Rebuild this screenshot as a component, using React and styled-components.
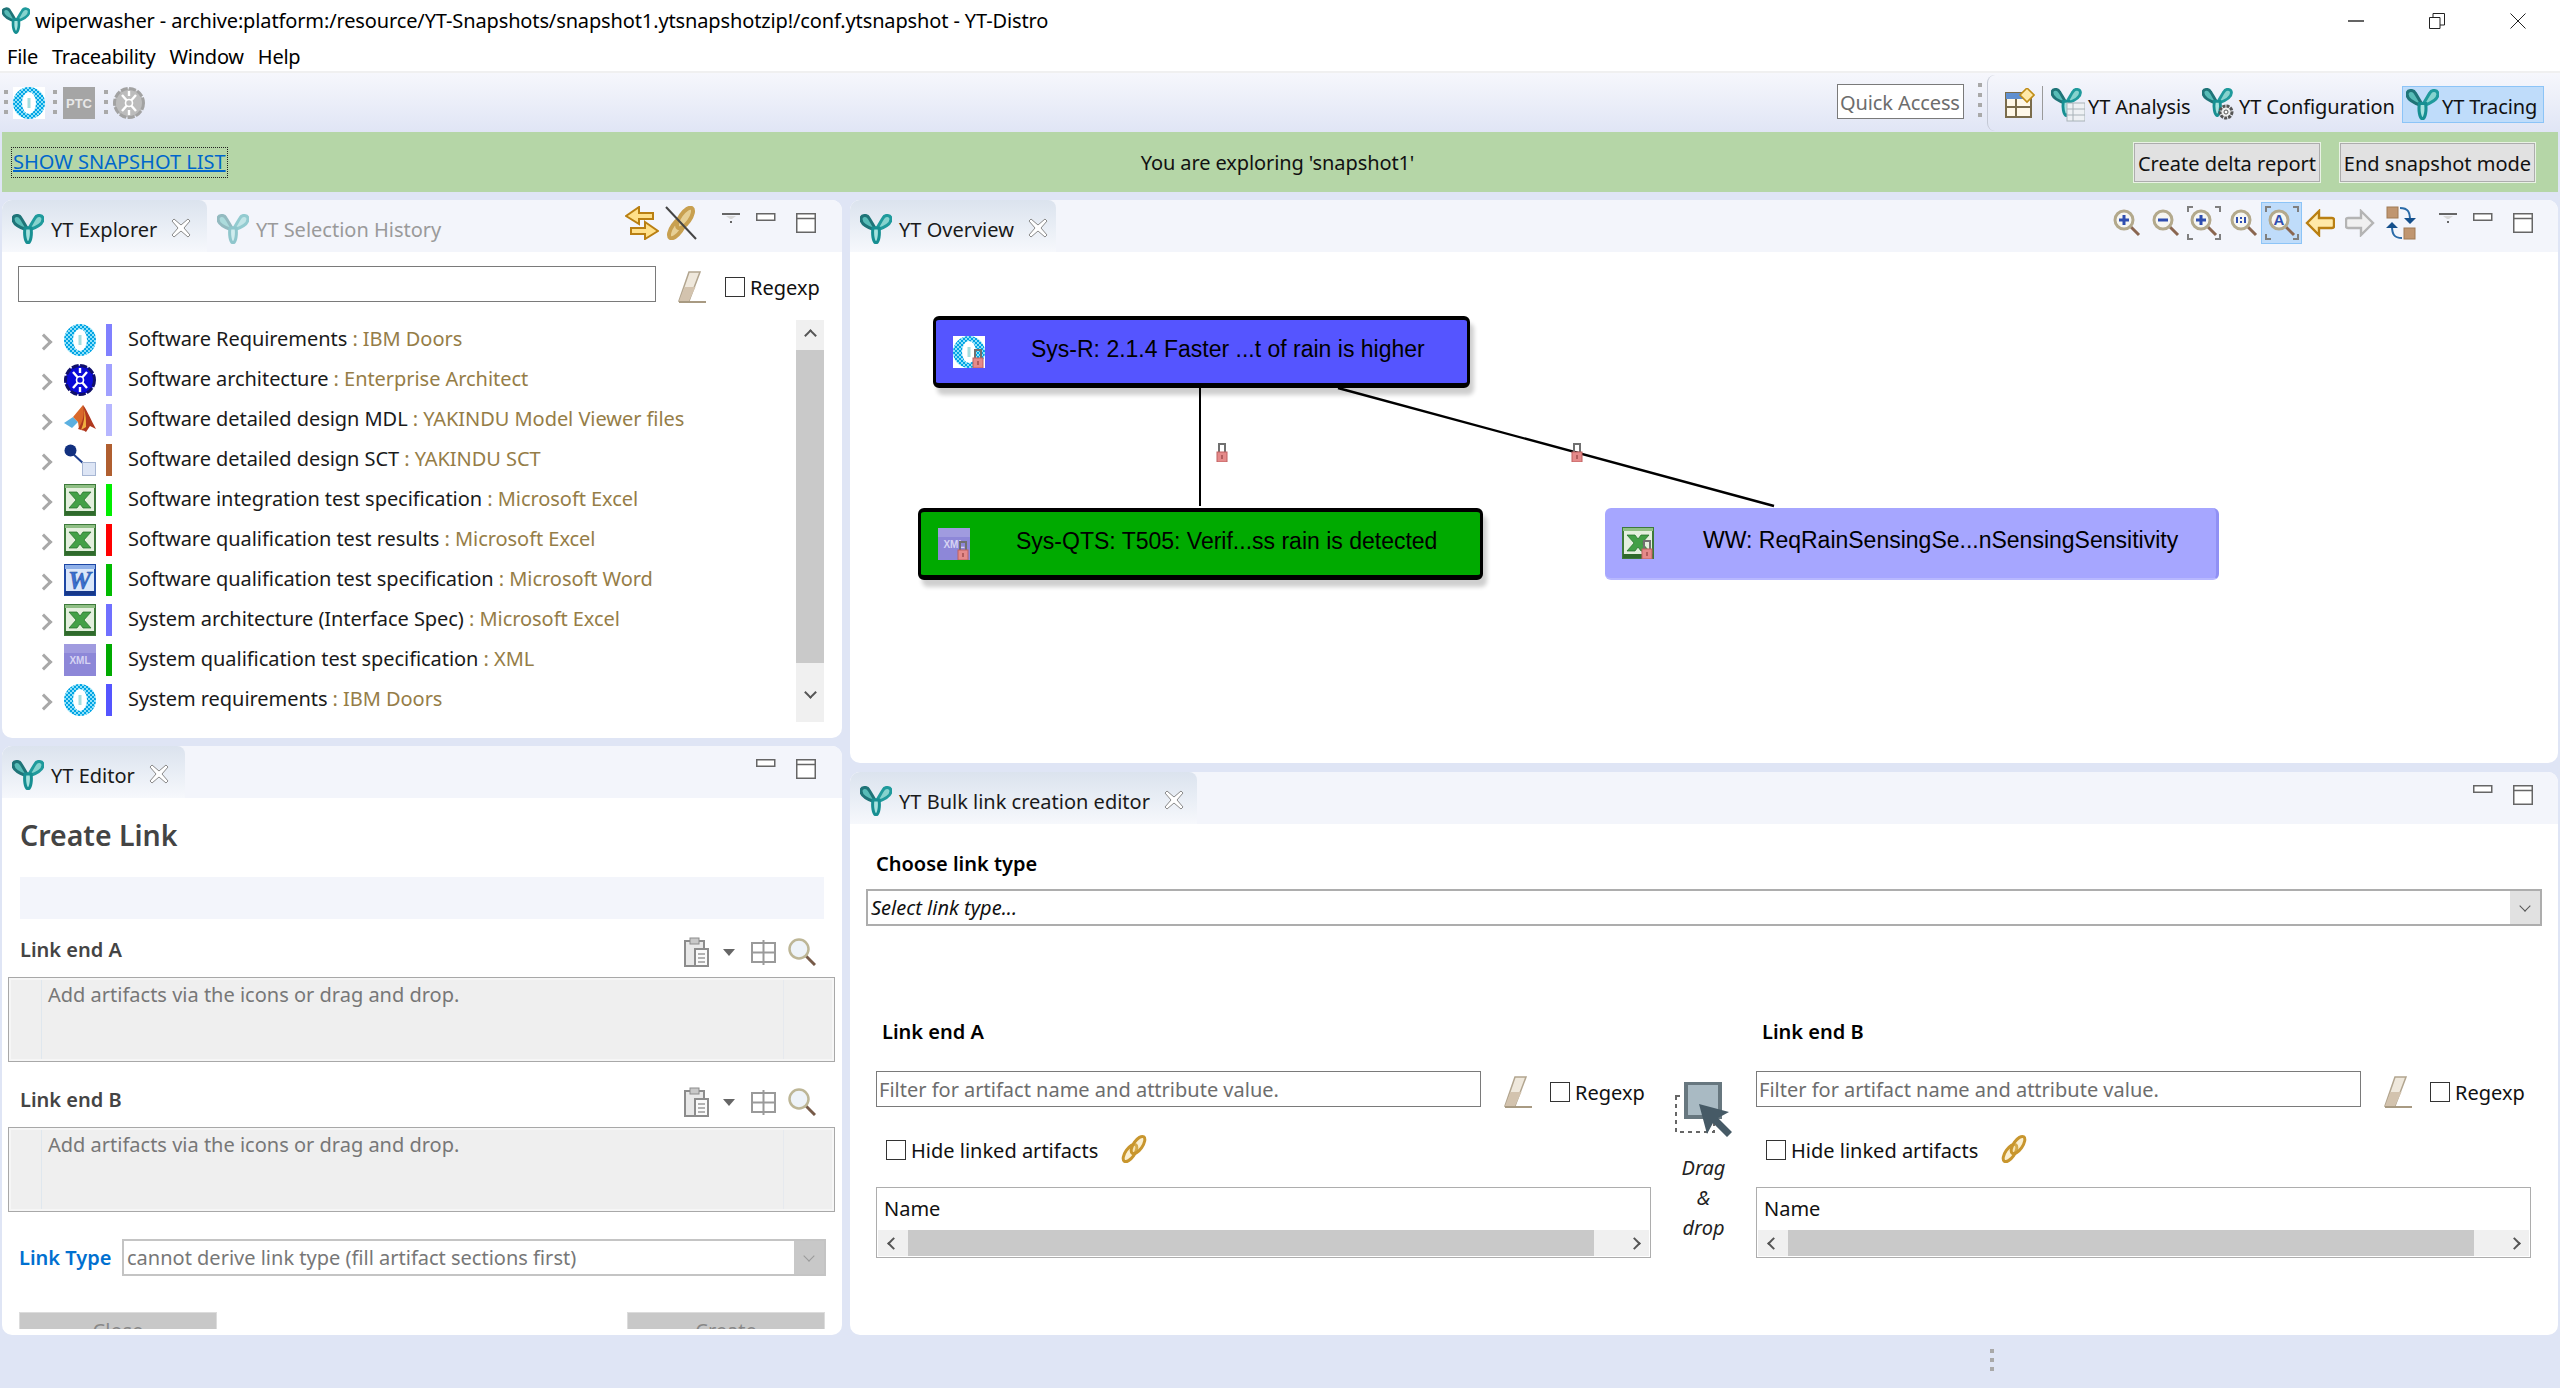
import React from "react";
import styled, { createGlobalStyle } from "styled-components";

const GlobalStyle = createGlobalStyle`
  html, body { margin: 0; padding: 0; background: #dfe5f5; }
  * { box-sizing: border-box; }
  body { font-family: "Noto Sans", "Open Sans", sans-serif; font-size: 20px; color: #1a1a1a; }
`;

/* ---------- drawn icons ---------- */

const YtLogoPaths = () => (
  <>
    <path d="M15 16C9 14 1 11 1 5 1 1 7 0 9 4c2 3 4 7 6 10z" fill="#58bcb7" stroke="#1f7478" strokeWidth="3" />
    <path d="M17 16c6-2 14-5 14-11 0-4-6-5-8-1-2 3-4 7-6 10z" fill="#86d3ce" stroke="#1f9a9c" strokeWidth="3" />
    <path d="M13 14c-1 6 0 14 3 15 3-1 4-9 3-15z" fill="#a5e2de" stroke="#178f92" strokeWidth="3" />
  </>
);

const YtLogo = ({ faded, w = 32, h = 30 }) => (
  <svg width={w} height={h} viewBox="0 0 32 30" opacity={faded ? 0.45 : 1} style={{ flexShrink: 0 }}>
    <YtLogoPaths />
  </svg>
);

const DoorsIcon = () => (
  <svg width="32" height="32" viewBox="0 0 32 32">
    <defs>
      <pattern id="chk" width="4" height="4" patternUnits="userSpaceOnUse">
        <rect width="4" height="4" fill="#8fe0f8" />
        <rect width="2" height="2" fill="#00a4e4" />
        <rect x="2" y="2" width="2" height="2" fill="#00a4e4" />
      </pattern>
    </defs>
    <rect width="32" height="32" fill="#fff" />
    <ellipse cx="16" cy="16" rx="16" ry="16" fill="url(#chk)" />
    <ellipse cx="16" cy="16" rx="7" ry="11" fill="#fff" />
    <rect x="14.5" y="11" width="3" height="10" fill="#a8dede" />
  </svg>
);

const EaIcon = ({ grey }) => (
  <svg width="32" height="32" viewBox="0 0 32 32">
    <circle cx="16" cy="16" r="14.5" fill={grey ? "#bcbcbc" : "#0a0ad8"} stroke={grey ? "#a2a2a2" : "#10106a"} strokeWidth="3" strokeDasharray="7 1.5" />
    <path d="M9 8l14 16M23 8L9 24M16 4v5M16 23v5" stroke="#fff" strokeWidth="2.4" />
    <circle cx="16" cy="16" r="3.5" fill={grey ? "#bcbcbc" : "#0a0ad8"} stroke="#fff" strokeWidth="1.6" />
  </svg>
);

const PtcIcon = () => (
  <svg width="32" height="32" viewBox="0 0 32 32">
    <rect width="32" height="32" fill="#a5a5a5" />
    <text x="16" y="21" textAnchor="middle" fontSize="13" fontWeight="700" fontFamily="Liberation Sans, sans-serif" fill="#e8e8e8">PTC</text>
  </svg>
);

const MatlabIcon = () => (
  <svg width="32" height="32" viewBox="0 0 32 32">
    <path d="M0 19l9-6 5 5-6 6z" fill="#5bb0e0" />
    <path d="M9 13l10-12 4 10-8 14-1-7z" fill="#d9682a" />
    <path d="M19 1c4 5 8 15 13 24l-6-3-4 6c-2-2-6-2-8-3 5-7 7-15 5-24z" fill="#b0381e" />
    <path d="M20 5c2 6 2 12 2 18l-5 3c3-7 4-14 3-21z" fill="#f0b040" />
  </svg>
);

const SctIcon = () => (
  <svg width="32" height="32" viewBox="0 0 32 32">
    <path d="M7 8l15 14" stroke="#1e3f8f" strokeWidth="2" />
    <circle cx="6.5" cy="6.5" r="6" fill="#12307f" />
    <rect x="18.5" y="18.5" width="13" height="13" fill="#dde5f5" stroke="#a7b6d3" />
  </svg>
);

const ExcelIcon = () => (
  <svg width="32" height="32" viewBox="0 0 32 32">
    <rect x="1" y="1" width="30" height="30" fill="#e4f0de" stroke="#3d7a3a" strokeWidth="2" />
    <rect x="1" y="1" width="30" height="3" fill="#8fbf85" />
    <rect x="1" y="27" width="30" height="4" fill="#2f6a2c" />
    <path d="M5 8h8l3 4 3-4h8l-7 8 7 8h-8l-3-4-3 4H5l7-8z" fill="#43a047" stroke="#1f6b25" strokeWidth="0.7" />
  </svg>
);

const WordIcon = () => (
  <svg width="32" height="32" viewBox="0 0 32 32">
    <rect x="1" y="1" width="30" height="30" fill="#dbe7fa" stroke="#1d47a5" strokeWidth="2" />
    <rect x="1" y="1" width="30" height="4" fill="#8fb0e8" />
    <rect x="1" y="27" width="30" height="4" fill="#17388a" />
    <text x="15.5" y="25" textAnchor="middle" fontSize="26" fontWeight="700" fontStyle="italic" fontFamily="Liberation Serif, serif" fill="#3a6fd0" stroke="#24509f" strokeWidth="0.5">W</text>
  </svg>
);

const XmlIcon = () => (
  <svg width="32" height="32" viewBox="0 0 32 32">
    <rect width="32" height="32" fill="#8d87d8" />
    <rect width="32" height="9" fill="#a09bdf" />
    <text x="16" y="20" textAnchor="middle" fontSize="10" fontWeight="700" fontFamily="Liberation Sans, sans-serif" fill="#d6d3f3">XML</text>
  </svg>
);

const LockIcon = ({ w = 18, h = 20 }) => (
  <svg width={w} height={h} viewBox="0 0 12 20">
    <path d="M3 10V2h6v8" fill="none" stroke="#707070" strokeWidth="2" />
    <rect x="1" y="10" width="10" height="10" fill="#e58a8a" stroke="#c06060" />
    <rect x="5.5" y="13" width="1" height="4" fill="#803030" />
  </svg>
);

const Eraser = () => (
  <svg width="30" height="36" viewBox="0 0 30 36">
    <path d="M13 3h11L13 32H3z" fill="#efe8dc" stroke="#b2a58f" strokeWidth="1.5" />
    <path d="M8.5 18h11L13 32H3z" fill="#d3c3ae" />
    <path d="M3 33h27" stroke="#a89a82" strokeWidth="2" />
  </svg>
);

const ChainIcon = () => (
  <svg width="30" height="30" viewBox="0 0 30 30">
    <g fill="#f1d27a" fillOpacity="0.35" stroke="#c8962e" strokeWidth="3">
      <ellipse cx="11" cy="19" rx="4.5" ry="10" transform="rotate(35 11 19)" />
      <ellipse cx="19" cy="11" rx="4.5" ry="10" transform="rotate(35 19 11)" />
    </g>
  </svg>
);

const CloseGlyph = () => (
  <svg width="20" height="20" viewBox="0 0 20 20">
    <path d="M3 1l7 6 7-6 2 2-6 7 6 7-2 2-7-6-7 6-2-2 6-7-6-7z" fill="#fff" stroke="#8a8a8a" />
  </svg>
);

const ViewMenuGlyph = () => (
  <svg width="18" height="10" viewBox="0 0 18 10">
    <rect width="18" height="2" fill="#666" />
    <path d="M4 3h10l-4 3H8z" fill="#d8d8d8" />
    <rect x="8" y="8" width="2" height="2" fill="#666" />
  </svg>
);

const MinGlyph = () => (
  <svg width="20" height="8" viewBox="0 0 20 8">
    <rect x="0.75" y="0.75" width="18" height="6.5" fill="#fff" stroke="#666" strokeWidth="1.5" />
  </svg>
);

const MaxGlyph = () => (
  <svg width="20" height="20" viewBox="0 0 20 20">
    <rect x="0.75" y="0.75" width="18.5" height="18.5" fill="#fff" stroke="#666" strokeWidth="1.5" />
    <path d="M1 5.5h18" stroke="#666" strokeWidth="1.5" />
  </svg>
);

const Magnifier = ({ glyph, corners }) => (
  <svg width={corners ? 34 : 28} height={corners ? 34 : 28} viewBox={corners ? "-3 -3 34 34" : "0 0 28 28"}>
    <path d="M16 16l10 10" stroke="#8a6650" strokeWidth="3" />
    <circle cx="11" cy="11" r="9" fill="#f6f6f2" stroke="#b3a98c" strokeWidth="3" />
    {glyph === "plus" && <path d="M6 11h10M11 6v10" stroke="#2f4eb0" strokeWidth="3" />}
    {glyph === "minus" && <path d="M6 11h10" stroke="#2f4eb0" strokeWidth="3" />}
    {glyph === "one" && <path d="M7 8v6M15 8v6M11 8v2M11 12v2" stroke="#2f4eb0" strokeWidth="2" />}
    {glyph === "a" && <text x="11" y="16" textAnchor="middle" fontSize="15" fontWeight="700" fontFamily="Liberation Sans, sans-serif" fill="#2f4eb0">A</text>}
    {corners && <path d="M-2 3v-5h5M25-2h5v5M-2 25v5h5M25 30h5v-5" fill="none" stroke="#7f7f7f" strokeWidth="2" />}
  </svg>
);

const ArrowIcon = ({ dir, muted }) => (
  <svg width="30" height="28" viewBox="0 0 30 28" style={{ transform: dir === "right" ? "scaleX(-1)" : undefined }}>
    <path d="M14 2L2 14l12 12v-7h13c2 0 2-1 2-2v-6c0-1 0-2-2-2H14z" fill={muted ? "#f0f0f0" : "#ffe9a8"} stroke={muted ? "#b4b4b4" : "#b97f12"} strokeWidth="2.4" />
  </svg>
);

const SyncIcon = () => (
  <svg width="30" height="34" viewBox="0 0 30 34">
    <rect x="1" y="1" width="11" height="11" fill="#c09670" stroke="#a07a55" />
    <rect x="18" y="22" width="11" height="11" fill="#c09670" stroke="#a07a55" />
    <path d="M14 2c8 0 10 4 10 12M16 32c-8 0-10-4-10-12" fill="none" stroke="#2a6ba8" strokeWidth="2" />
    <path d="M18 12h12l-6 6zM0 22h12l-6-6z" fill="#15508c" />
  </svg>
);

const SwapArrows = () => (
  <svg width="34" height="34" viewBox="0 0 34 34">
    <path d="M14 1L1 10l13 8v-5h14V7H14zM20 16l13 9-13 8v-5H6v-6h14z" fill="#ffe08a" stroke="#b97f12" strokeWidth="2" />
  </svg>
);

const UnlinkIcon = () => (
  <svg width="34" height="34" viewBox="0 0 34 34">
    <g fill="#e6cf95" stroke="#c8a050" strokeWidth="4">
      <ellipse cx="13" cy="22" rx="5" ry="12" transform="rotate(35 13 22)" />
      <ellipse cx="21" cy="12" rx="5" ry="12" transform="rotate(35 21 12)" />
    </g>
    <path d="M2 1l30 32" stroke="#444" strokeWidth="2" />
  </svg>
);

const Clipboard = () => (
  <svg width="28" height="30" viewBox="0 0 28 30">
    <rect x="2" y="4" width="19" height="25" fill="#e8e8e8" stroke="#8c8c8c" strokeWidth="2" />
    <rect x="7" y="1" width="9" height="6" fill="#c8c8c8" stroke="#8c8c8c" />
    <rect x="12" y="12" width="13" height="17" fill="#fafafa" stroke="#8c8c8c" strokeWidth="2" />
    <path d="M15 17h7M15 21h7M15 25h7" stroke="#9a9a9a" strokeWidth="1.5" />
  </svg>
);

const GridGlyph = () => (
  <svg width="25" height="25" viewBox="0 0 25 25">
    <rect x="1" y="3" width="23" height="19" fill="none" stroke="#9a9a9a" strokeWidth="2" />
    <path d="M12.5 0v25M1 12.5h23" stroke="#9a9a9a" strokeWidth="2" />
  </svg>
);

const SearchGlyph = () => (
  <svg width="28" height="28" viewBox="0 0 28 28">
    <path d="M17 17l10 10" stroke="#765a48" strokeWidth="3" />
    <circle cx="11" cy="11" r="9.5" fill="#eef3f8" stroke="#bdb696" strokeWidth="2.5" />
  </svg>
);

const DragIcon = () => (
  <svg width="58" height="58" viewBox="0 0 58 58">
    <rect x="1" y="14" width="38" height="36" fill="none" stroke="#666" strokeWidth="2" strokeDasharray="4 4" />
    <rect x="11" y="1" width="34" height="34" fill="#a9bac3" stroke="#67777f" strokeWidth="4" />
    <path d="M24 22l8 30 6-11 14 14 5-5-14-14 11-6z" fill="#465a66" />
  </svg>
);

const PerspectiveIcon = () => (
  <svg width="30" height="30" viewBox="0 0 30 30">
    <rect x="1" y="5" width="25" height="24" fill="#fff8e8" stroke="#7a6c4c" strokeWidth="2" />
    <rect x="1" y="5" width="25" height="6" fill="#5f8fd0" />
    <path d="M11 11v18M1 19h25" stroke="#7a6c4c" strokeWidth="2" />
    <path d="M22 0l7 7-7 7-7-7z" fill="#ffe9a8" stroke="#c08d18" strokeWidth="1.6" />
  </svg>
);

const AnalysisLogo = () => (
  <svg width="34" height="34" viewBox="0 0 34 34">
    <g transform="scale(0.95)"><YtLogoPaths /></g>
    <rect x="16" y="15" width="18" height="18" fill="#eef1f4" stroke="#a8b2b8" />
    <path d="M16 21h18M16 27h18M22 15v18" stroke="#a8b2b8" />
  </svg>
);

const ConfigLogo = () => (
  <svg width="34" height="34" viewBox="0 0 34 34">
    <g transform="scale(0.95)"><YtLogoPaths /></g>
    <circle cx="24" cy="24" r="6" fill="#eee" stroke="#555" strokeWidth="3" strokeDasharray="3 1" />
    <circle cx="24" cy="24" r="2" fill="#fff" stroke="#555" />
  </svg>
);

/* ---------- window chrome ---------- */

const Page = styled.div`
  width: 2560px;
  height: 1388px;
  display: flex;
  flex-direction: column;
  background: #dfe5f5;
  overflow: hidden;
`;

const TitleBar = styled.div`
  height: 36px;
  background: #fff;
  display: flex;
  align-items: center;
  padding: 5px 0 0 2px;
  gap: 5px;
  color: #000;
`;

const TitleText = styled.div`
  flex: 1;
  white-space: nowrap;
  letter-spacing: -0.13px;
`;

const WinButtons = styled.div`
  display: flex;
  gap: 65px;
  padding-right: 34px;
  align-items: center;
`;

const MenuBar = styled.div`
  height: 37px;
  background: #fff;
  display: flex;
  gap: 14px;
  padding: 5px 0 0 7px;
  align-items: center;
  color: #000;
  letter-spacing: -0.25px;
  border-bottom: 2px solid #f0f0f0;
`;

const ToolBar = styled.div`
  height: 59px;
  display: flex;
  align-items: center;
  padding-right: 16px;
  background: linear-gradient(#f6f7fc, #e0e5f5);
`;

const Grip = styled.div`
  width: 4px;
  height: ${(p) => p.$h || 26}px;
  margin-left: ${(p) => p.$ml}px;
  margin-right: ${(p) => p.$mr}px;
  background: repeating-linear-gradient(#a9a9a9 0 4px, transparent 4px 10px);
`;

const QuickAccess = styled.div`
  margin-left: auto;
  width: 127px;
  height: 35px;
  margin-top: -2px;
  border: 1px solid #7a7a7a;
  background: #fff;
  color: #6d6d6d;
  padding-left: 2px;
  line-height: 35px;
  letter-spacing: -0.1px;
  white-space: nowrap;
  overflow: hidden;
`;

const CurveSep = styled.div`
  width: 9px;
  height: 56px;
  border-left: 1px solid #c4c8d4;
  border-radius: 8px 0 0 8px;
  margin: 0 9px 0 5px;
`;

const ThinSep = styled.div`
  width: 1px;
  height: 34px;
  background: #9a9a9a;
  margin: 0 7px;
`;

const Perspective = styled.div`
  width: ${(p) => p.$w}px;
  height: 37px;
  margin-top: 4px;
  display: flex;
  align-items: center;
  gap: 3px;
  padding-left: ${(p) => (p.$active ? 3 : 0)}px;
  white-space: nowrap;
  color: #111;
  letter-spacing: -0.1px;
  background: ${(p) => (p.$active ? "#bfdcfa" : "transparent")};
  border: 1px solid ${(p) => (p.$active ? "#8cc4f7" : "transparent")};
`;

const PerspectiveLabel = styled.span`
  margin-top: 3px;
`;

const SnapshotBar = styled.div`
  height: 60px;
  margin: 0 2px;
  padding-right: 23px;
  background: #b5d6a7;
  display: grid;
  grid-template-columns: 1fr auto 1fr;
  align-items: center;
`;

const SnapshotLink = styled.a`
  justify-self: start;
  margin-left: 10px;
  height: 29px;
  line-height: 28px;
  padding: 0 1px;
  color: #0066cc;
  text-decoration: underline;
  outline: 1px dotted #222;
  white-space: nowrap;
`;

const SnapshotNote = styled.div`
  color: #111;
  margin-left: 18px;
  letter-spacing: -0.1px;
`;

const SnapshotActions = styled.div`
  justify-self: end;
  display: flex;
  gap: 20px;
`;

const GreyButton = styled.div`
  width: ${(p) => p.$w}px;
  height: 39px;
  background: #e1e1e1;
  border: 1px solid #adadad;
  box-shadow: 0 0 0 1px #e9f2e4;
  text-align: center;
  line-height: 39px;
  color: #111;
  white-space: nowrap;
`;

/* ---------- panels ---------- */

const Workbench = styled.div`
  flex: 1;
  display: flex;
  gap: 8px;
  padding: 8px 2px 53px;
`;

const Column = styled.div`
  width: ${(p) => p.$w}px;
  display: flex;
  flex-direction: column;
  gap: ${(p) => p.$gap}px;
`;

const Panel = styled.section`
  height: ${(p) => p.$h}px;
  display: flex;
  flex-direction: column;
  background: #fff;
  border-radius: 10px;
  overflow: hidden;
  padding-bottom: 6px;
`;

const PanelHead = styled.header`
  height: 52px;
  flex-shrink: 0;
  background: #f3f5fb;
  display: flex;
  align-items: stretch;
`;

const Tab = styled.div`
  width: ${(p) => p.$w}px;
  display: flex;
  align-items: center;
  padding: 6px 0 0 10px;
  gap: 7px;
  white-space: nowrap;
  border-radius: 8px 8px 0 0;
  color: ${(p) => (p.$active ? "#1a1a1a" : "#9a9a9a")};
  background: ${(p) => (p.$active ? "linear-gradient(#dbe3ee, #f6f8fc)" : "transparent")};
`;

const TabClose = styled.span`
  display: flex;
  margin-left: ${(p) => p.$ml}px;
  margin-top: -3px;
`;

const HeadTools = styled.div`
  margin-left: auto;
  display: flex;
  align-items: center;
  padding-right: ${(p) => p.$pr}px;
`;

const ToolSlot = styled.div`
  display: flex;
  align-items: center;
  justify-content: center;
  margin-left: ${(p) => p.$ml || 0}px;
  margin-top: ${(p) => p.$mt || 0}px;
  ${(p) => p.$on && "padding: 3px 2.5px; background: #bfdcfa; outline: 1px solid #8cc4f7;"}
`;

const Glyphs = ({ noMenu, menuGap = 24 }) => (
  <>
    {!noMenu && <ToolSlot $ml={menuGap} $mt={-17}><ViewMenuGlyph /></ToolSlot>}
    <ToolSlot $ml={noMenu ? 0 : 16} $mt={-19}><MinGlyph /></ToolSlot>
    <ToolSlot $ml={20} $mt={-7}><MaxGlyph /></ToolSlot>
  </>
);

/* ---------- explorer ---------- */

const FilterRow = styled.div`
  display: flex;
  align-items: center;
  height: 36px;
  margin-top: 14px;
  padding-left: 16px;
  flex-shrink: 0;
`;

const FilterInput = styled.input`
  width: ${(p) => p.$w}px;
  height: 36px;
  border: 1px solid #7a7a7a;
  background: #fff;
  padding: 0 2px;
  font: inherit;
  outline: none;
  &::placeholder { color: #6d6d6d; opacity: 1; }
`;

const FilterExtras = styled.div`
  display: flex;
  align-items: center;
  margin-top: 6px;
`;

const EraserSlot = styled.span`
  display: flex;
  margin: 0 ${(p) => p.$mr}px 0 ${(p) => p.$ml}px;
`;

const Check = styled.span`
  width: 20px;
  height: 20px;
  flex-shrink: 0;
  background: #fff;
  border: 1px solid #333;
`;

const CheckLabel = styled.span`
  margin-left: 5px;
  color: #111;
  white-space: nowrap;
`;

const TreeArea = styled.div`
  display: flex;
  margin-top: 18px;
  padding-left: 41px;
`;

const TreeList = styled.div`
  flex: 1;
  padding-top: 4px;
`;

const TreeRow = styled.div`
  height: 40px;
  display: flex;
  align-items: center;
  white-space: nowrap;
  padding-bottom: 8px;
`;

const TreeText = styled.span`
  margin-top: -3px;
  letter-spacing: -0.05px;
`;

const Chevron = styled.span`
  width: 12px;
  height: 12px;
  margin: 3px 14px 0 -5px;
  border-top: 3px solid #a8a8a8;
  border-right: 3px solid #a8a8a8;
  transform: rotate(45deg);
`;

const RowIcon = styled.span`
  width: 32px;
  height: 32px;
  display: flex;
`;

const ColorBar = styled.span`
  width: 6px;
  height: 32px;
  margin: 0 16px 0 10px;
  background: ${(p) => p.$c};
`;

const TreeTail = styled.span`
  color: #957d47;
`;

const VScroll = styled.div`
  width: 28px;
  height: 402px;
  margin-right: 18px;
  display: flex;
  flex-direction: column;
  background: #f0f0f0;
`;

const ScrollEnd = styled.div`
  height: ${(p) => p.$h}px;
  flex-shrink: 0;
  display: flex;
  align-items: center;
  justify-content: center;
`;

const VThumb = styled.div`
  height: 313px;
  background: #c9c9c9;
`;

const ScrollCaret = styled.span`
  width: 9px;
  height: 9px;
  border-top: 2px solid #555;
  border-left: 2px solid #555;
  transform: rotate(${(p) => p.$deg}deg);
`;

/* ---------- overview ---------- */

const Canvas = styled.div`
  position: relative;
  flex: 1;
`;

const Wires = styled.svg`
  position: absolute;
  left: 0;
  top: 0;
  z-index: 1;
  pointer-events: none;
`;

const Node = styled.div`
  position: absolute;
  left: ${(p) => p.$x}px;
  top: ${(p) => p.$y}px;
  width: ${(p) => p.$w}px;
  height: 72px;
  display: flex;
  align-items: center;
  gap: ${(p) => p.$gap}px;
  padding-left: 17px;
  background: ${(p) => p.$bg};
  border-radius: 6px;
  border: ${(p) => (p.$plain ? "none" : "3px solid #000")};
  border-top-width: ${(p) => (p.$plain ? 0 : 4)}px;
  border-bottom-width: ${(p) => (p.$plain ? 0 : 5)}px;
  ${(p) => p.$plain && "border-right: 3px solid #9090f4; border-bottom: 2px solid #b8b8ff;"}
  box-shadow: ${(p) => (p.$plain ? "none" : "4px 7px 4px #cfcfcf")};
  font-family: "Liberation Sans", Arial, sans-serif;
  font-size: 23px;
  color: #000;
  white-space: nowrap;
`;

const NodeLabel = styled.span`
  margin-top: -5px;
`;

const NodeIcon = styled.span`
  position: relative;
  width: 32px;
  height: 32px;
  display: flex;
`;

const NodeLock = styled.span`
  position: absolute;
  right: 0;
  bottom: 0;
  display: flex;
`;

const WireLock = styled.span`
  position: absolute;
  z-index: 2;
  left: ${(p) => p.$x}px;
  top: ${(p) => p.$y}px;
  display: flex;
`;

/* ---------- create link editor ---------- */

const EditorBody = styled.div`
  flex: 1;
  min-height: 0;
  overflow: hidden;
`;

const FormTitle = styled.h1`
  margin: 19px 0 0 18px;
  height: 36px;
  line-height: 36px;
  font-size: 28.5px;
  font-weight: 600;
  color: #444;
`;

const Band = styled.div`
  height: 42px;
  width: 804px;
  margin: 24px 0 0 18px;
  background: #f3f5fb;
`;

const EndHead = styled.div`
  height: 32px;
  margin-top: ${(p) => p.$mt}px;
  padding: 0 26px 0 18px;
  display: flex;
  align-items: center;
  font-weight: 600;
  color: #444;
`;

const EndName = styled.span`
  margin-top: -6px;
`;

const EndTools = styled.div`
  margin-left: auto;
  display: flex;
  align-items: center;
`;

const DropCaret = styled.span`
  width: 0;
  height: 0;
  margin: 0 16px 0 12px;
  border: 6px solid transparent;
  border-top: 7px solid #666;
  border-bottom: 0;
`;

const ArtifactBox = styled.div`
  width: 827px;
  height: 85px;
  margin: 9px 0 0 6px;
  padding: 3px 0 0 39px;
  background:
    linear-gradient(90deg, transparent 32px, #dfe7ee 32px 33px, transparent 33px),
    linear-gradient(90deg, transparent 774px, #e6e9ee 774px 775px, transparent 775px),
    #efefef;
  border: 1px solid #a8a8a8;
  box-shadow: inset 0 0 0 2px #f6f6f6;
  color: #777;
`;

const LinkTypeRow = styled.div`
  display: flex;
  align-items: center;
  margin: 27px 0 0 17px;
`;

const LinkTypeLabel = styled.div`
  width: 103px;
  font-weight: 600;
  color: #0070d0;
  white-space: nowrap;
`;

const Combo = styled.div`
  width: ${(p) => p.$w}px;
  height: 37px;
  margin: ${(p) => p.$m || 0};
  display: flex;
  align-items: center;
  justify-content: space-between;
  padding-left: 3px;
  background: #fff;
  border: 2px solid ${(p) => (p.$off ? "#c4c4c4" : "#adadad")};
  color: ${(p) => (p.$off ? "#777" : "#111")};
  font-style: ${(p) => (p.$italic ? "italic" : "normal")};
  white-space: nowrap;
`;

const ComboArrow = styled.span`
  width: 30px;
  height: 100%;
  flex-shrink: 0;
  display: flex;
  align-items: center;
  justify-content: center;
  background: ${(p) => (p.$off ? "#c8c8c8" : "#e1e1e1")};
`;

const ComboCaret = styled.span`
  width: 8px;
  height: 8px;
  margin-top: -4px;
  border-right: 1px solid ${(p) => (p.$off ? "#9a9a9a" : "#555")};
  border-bottom: 1px solid ${(p) => (p.$off ? "#9a9a9a" : "#555")};
  transform: rotate(45deg);
`;

const ActionRow = styled.div`
  display: flex;
  justify-content: space-between;
  width: 806px;
  margin: 36px 0 0 17px;
`;

const ClippedButton = styled.div`
  width: 198px;
  height: 38px;
  flex-shrink: 0;
  background: #c8c8c8;
  border: 1px solid #dcdcdc;
  text-align: center;
  line-height: 36px;
  color: #888;
`;

/* ---------- bulk link editor ---------- */

const BulkBody = styled.div`
  flex: 1;
  min-height: 0;
`;

const BoldLabel = styled.div`
  height: 28px;
  line-height: 28px;
  font-weight: 600;
  color: #000;
  margin: ${(p) => p.$m};
`;

const Ends = styled.div`
  display: flex;
  margin: 92px 0 0 26px;
`;

const EndColumn = styled.div`
  width: 775px;
`;

const EndFilter = styled.div`
  display: flex;
  align-items: center;
  height: 36px;
  margin-top: 25px;
`;

const HideRow = styled.div`
  display: flex;
  align-items: center;
  height: 30px;
  margin: 28px 0 0 10px;
`;

const ChainSlot = styled.span`
  display: flex;
  margin-left: 21px;
  margin-top: -2px;
`;

const NameTable = styled.div`
  height: 71px;
  margin-top: 22px;
  padding: 0 1px 1px;
  display: flex;
  flex-direction: column;
  border: 1px solid #adadad;
`;

const NameHead = styled.div`
  flex: 1;
  padding-left: 6px;
  line-height: 42px;
  color: #111;
`;

const HScroll = styled.div`
  height: 28px;
  display: flex;
  background: #f0f0f0;
`;

const HEnd = styled.div`
  width: 30px;
  display: flex;
  align-items: center;
  justify-content: center;
`;

const HThumb = styled.div`
  flex: 1;
  margin-right: 25px;
  background: #c9c9c9;
`;

const DropHint = styled.div`
  width: 105px;
  padding-top: 64px;
  display: flex;
  flex-direction: column;
  align-items: center;
`;

const DropWords = styled.div`
  margin-top: 13px;
  font-style: italic;
  line-height: 30px;
  text-align: center;
  color: #222;
`;

const BottomGrip = styled.div`
  position: absolute;
  left: 1990px;
  top: 1349px;
  width: 4px;
  height: 26px;
  background: repeating-linear-gradient(#a9a9a9 0 4px, transparent 4px 9px);
`;

/* ---------- data ---------- */

const rows = [
  ["Software Requirements", "IBM Doors", "#8080ff", <DoorsIcon />],
  ["Software architecture", "Enterprise Architect", "#a0a0ff", <EaIcon />],
  ["Software detailed design MDL", "YAKINDU Model Viewer files", "#b6b6ff", <MatlabIcon />],
  ["Software detailed design SCT", "YAKINDU SCT", "#b05f30", <SctIcon />],
  ["Software integration test specification", "Microsoft Excel", "#00ee00", <ExcelIcon />],
  ["Software qualification test results", "Microsoft Excel", "#ff0000", <ExcelIcon />],
  ["Software qualification test specification", "Microsoft Word", "#00bb00", <WordIcon />],
  ["System architecture (Interface Spec)", "Microsoft Excel", "#7070ff", <ExcelIcon />],
  ["System qualification test specification", "XML", "#00aa00", <XmlIcon />],
  ["System requirements", "IBM Doors", "#5555ff", <DoorsIcon />],
];

const LinkEnd = ({ title }) => (
  <EndColumn>
    <BoldLabel $m="0 0 0 6px">{title}</BoldLabel>
    <EndFilter>
      <FilterInput $w={605} placeholder="Filter for artifact name and attribute value." readOnly />
      <FilterExtras>
        <EraserSlot $ml={21} $mr={18}><Eraser /></EraserSlot>
        <Check />
        <CheckLabel>Regexp</CheckLabel>
      </FilterExtras>
    </EndFilter>
    <HideRow>
      <Check />
      <CheckLabel>Hide linked artifacts</CheckLabel>
      <ChainSlot><ChainIcon /></ChainSlot>
    </HideRow>
    <NameTable>
      <NameHead>Name</NameHead>
      <HScroll>
        <HEnd><ScrollCaret $deg={-45} /></HEnd>
        <HThumb />
        <HEnd><ScrollCaret $deg={135} /></HEnd>
      </HScroll>
    </NameTable>
  </EndColumn>
);

const ArtifactEnd = ({ title, mt }) => (
  <>
    <EndHead $mt={mt}>
      <EndName>{title}</EndName>
      <EndTools>
        <Clipboard />
        <DropCaret />
        <GridGlyph />
        <ToolSlot $ml={12}><SearchGlyph /></ToolSlot>
      </EndTools>
    </EndHead>
    <ArtifactBox>Add artifacts via the icons or drag and drop.</ArtifactBox>
  </>
);

export default function App() {
  return (
    <Page>
      <GlobalStyle />
      <TitleBar>
        <YtLogo w={28} h={27} />
        <TitleText>wiperwasher - archive:platform:/resource/YT-Snapshots/snapshot1.ytsnapshotzip!/conf.ytsnapshot - YT-Distro</TitleText>
        <WinButtons>
          <svg width="16" height="16" viewBox="0 0 16 16"><path d="M0 8h16" stroke="#222" strokeWidth="1.4" /></svg>
          <svg width="16" height="16" viewBox="0 0 16 16"><path d="M0.5 4.5h10.5v11H0.5zM4 4V0.5h11.5V12H11" fill="none" stroke="#222" /></svg>
          <svg width="16" height="16" viewBox="0 0 16 16"><path d="M0.5 0.5l15 15M15.5 0.5l-15 15" stroke="#222" /></svg>
        </WinButtons>
      </TitleBar>
      <MenuBar>
        <span>File</span>
        <span>Traceability</span>
        <span>Window</span>
        <span>Help</span>
      </MenuBar>

      <ToolBar>
        <Grip $ml={4} $mr={5} />
        <DoorsIcon />
        <Grip $ml={8} $mr={6} />
        <PtcIcon />
        <Grip $ml={9} $mr={5} />
        <EaIcon grey />
        <QuickAccess>Quick Access</QuickAccess>
        <Grip $ml={14} $mr={0} $h={40} />
        <CurveSep />
        <PerspectiveIcon />
        <ThinSep />
        <Perspective $w={151}><AnalysisLogo /><PerspectiveLabel>YT Analysis</PerspectiveLabel></Perspective>
        <Perspective $w={201}><ConfigLogo /><PerspectiveLabel>YT Configuration</PerspectiveLabel></Perspective>
        <Perspective $w={142} $active><YtLogo w={33} h={31} /><PerspectiveLabel>YT Tracing</PerspectiveLabel></Perspective>
      </ToolBar>

      <SnapshotBar>
        <SnapshotLink>SHOW SNAPSHOT LIST</SnapshotLink>
        <SnapshotNote>You are exploring 'snapshot1'</SnapshotNote>
        <SnapshotActions>
          <GreyButton $w={186}>Create delta report</GreyButton>
          <GreyButton $w={195}>End snapshot mode</GreyButton>
        </SnapshotActions>
      </SnapshotBar>

      <Workbench>
        <Column $w={840} $gap={8}>
          <Panel $h={538}>
            <PanelHead>
              <Tab $w={205} $active>
                <YtLogo />
                YT Explorer
                <TabClose $ml={7}><CloseGlyph /></TabClose>
              </Tab>
              <Tab $w={260}>
                <YtLogo faded />
                YT Selection History
              </Tab>
              <HeadTools $pr={26}>
                <ToolSlot $mt={-7}><SwapArrows /></ToolSlot>
                <ToolSlot $ml={5} $mt={-7}><UnlinkIcon /></ToolSlot>
                <Glyphs />
              </HeadTools>
            </PanelHead>
            <FilterRow>
              <FilterInput $w={638} readOnly />
              <FilterExtras>
                <EraserSlot $ml={20} $mr={19}><Eraser /></EraserSlot>
                <Check />
                <CheckLabel>Regexp</CheckLabel>
              </FilterExtras>
            </FilterRow>
            <TreeArea>
              <TreeList>
                {rows.map(([name, tool, color, icon]) => (
                  <TreeRow key={name}>
                    <Chevron />
                    <RowIcon>{icon}</RowIcon>
                    <ColorBar $c={color} />
                    <TreeText>{name}&nbsp;<TreeTail>: {tool}</TreeTail></TreeText>
                  </TreeRow>
                ))}
              </TreeList>
              <VScroll>
                <ScrollEnd $h={30}><ScrollCaret $deg={45} /></ScrollEnd>
                <VThumb />
                <ScrollEnd $h={59}><ScrollCaret $deg={225} /></ScrollEnd>
              </VScroll>
            </TreeArea>
          </Panel>

          <Panel $h={589}>
            <PanelHead>
              <Tab $w={183} $active>
                <YtLogo />
                YT Editor
                <TabClose $ml={7}><CloseGlyph /></TabClose>
              </Tab>
              <HeadTools $pr={26}>
                <Glyphs noMenu />
              </HeadTools>
            </PanelHead>
            <EditorBody>
              <FormTitle>Create Link</FormTitle>
              <Band />
              <ArtifactEnd title="Link end A" mt={17} />
              <ArtifactEnd title="Link end B" mt={24} />
              <LinkTypeRow>
                <LinkTypeLabel>Link Type</LinkTypeLabel>
                <Combo $w={704} $off>
                  cannot derive link type (fill artifact sections first)
                  <ComboArrow $off><ComboCaret $off /></ComboArrow>
                </Combo>
              </LinkTypeRow>
              <ActionRow>
                <ClippedButton>Close</ClippedButton>
                <ClippedButton>Create</ClippedButton>
              </ActionRow>
            </EditorBody>
          </Panel>
        </Column>

        <Column $w={1708} $gap={9}>
          <Panel $h={563}>
            <PanelHead>
              <Tab $w={206} $active>
                <YtLogo />
                YT Overview
                <TabClose $ml={7}><CloseGlyph /></TabClose>
              </Tab>
              <HeadTools $pr={25}>
                <ToolSlot $mt={-7}><Magnifier glyph="plus" /></ToolSlot>
                <ToolSlot $ml={11} $mt={-7}><Magnifier glyph="minus" /></ToolSlot>
                <ToolSlot $ml={7} $mt={-7}><Magnifier glyph="plus" corners /></ToolSlot>
                <ToolSlot $ml={9} $mt={-7}><Magnifier glyph="one" /></ToolSlot>
                <ToolSlot $ml={4} $mt={-7} $on><Magnifier glyph="a" corners /></ToolSlot>
                <ToolSlot $ml={4} $mt={-7}><ArrowIcon dir="left" /></ToolSlot>
                <ToolSlot $ml={10} $mt={-7}><ArrowIcon dir="right" muted /></ToolSlot>
                <ToolSlot $ml={11} $mt={-7}><SyncIcon /></ToolSlot>
                <Glyphs menuGap={23} />
              </HeadTools>
            </PanelHead>
            <Canvas>
              <Wires width="1708" height="500">
                <path d="M350 136V254" stroke="#000" strokeWidth="2" />
                <path d="M488 136L924 254" stroke="#000" strokeWidth="2.4" />
              </Wires>
              <WireLock $x={363} $y={190}><LockIcon /></WireLock>
              <WireLock $x={718} $y={190}><LockIcon /></WireLock>
              <Node $x={83} $y={64} $w={537} $gap={46} $bg="#5555ff">
                <NodeIcon><DoorsIcon /><NodeLock><LockIcon w={14} h={20} /></NodeLock></NodeIcon>
                <NodeLabel>Sys-R: 2.1.4 Faster ...t of rain is higher</NodeLabel>
              </Node>
              <Node $x={68} $y={256} $w={565} $gap={46} $bg="#00aa00">
                <NodeIcon><XmlIcon /><NodeLock><LockIcon w={14} h={20} /></NodeLock></NodeIcon>
                <NodeLabel>Sys-QTS: T505: Verif...ss rain is detected</NodeLabel>
              </Node>
              <Node $x={755} $y={256} $w={614} $gap={49} $bg="#a6a6ff" $plain>
                <NodeIcon><ExcelIcon /><NodeLock><LockIcon w={14} h={20} /></NodeLock></NodeIcon>
                <NodeLabel>WW: ReqRainSensingSe...nSensingSensitivity</NodeLabel>
              </Node>
            </Canvas>
          </Panel>

          <Panel $h={563}>
            <PanelHead>
              <Tab $w={347} $active>
                <YtLogo />
                YT Bulk link creation editor
                <TabClose $ml={7}><CloseGlyph /></TabClose>
              </Tab>
              <HeadTools $pr={25}>
                <Glyphs noMenu />
              </HeadTools>
            </PanelHead>
            <BulkBody>
              <BoldLabel $m="26px 0 0 26px">Choose link type</BoldLabel>
              <Combo $w={1676} $m="11px 0 0 16px" $italic>
                Select link type...
                <ComboArrow><ComboCaret /></ComboArrow>
              </Combo>
              <Ends>
                <LinkEnd title="Link end A" />
                <DropHint>
                  <DragIcon />
                  <DropWords>Drag<br />&amp;<br />drop</DropWords>
                </DropHint>
                <LinkEnd title="Link end B" />
              </Ends>
            </BulkBody>
          </Panel>
        </Column>
      </Workbench>
      <BottomGrip />
    </Page>
  );
}
